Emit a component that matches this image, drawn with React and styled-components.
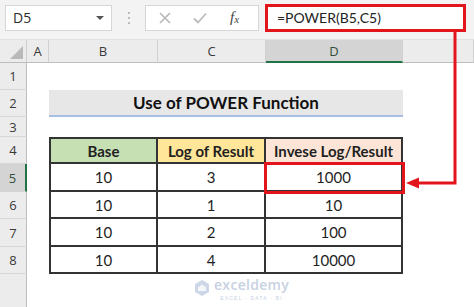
import React from "react";
import styled, { createGlobalStyle } from "styled-components";

const GlobalStyle = createGlobalStyle`
  html, body {
    margin: 0;
    padding: 0;
    background: #ffffff;
    overflow: hidden;
  }
`;

const COLS = "27px 22px 109px 108px 137px 1fr";

const Page = styled.div`
  position: relative;
  width: 474px;
  height: 307px;
  background: #ffffff;
  font-family: "Lato", "Liberation Sans", sans-serif;
  color: #1f1f1f;
  overflow: hidden;
`;

const Toolbar = styled.div`
  height: 40px;
  background: #f3f3f3;
  display: flex;
  align-items: center;
  padding: 0 8px 0 5px;
  box-sizing: border-box;
  border-bottom: 1px solid #e0e0e0;
`;

const NameBox = styled.div`
  width: 107px;
  height: 26px;
  margin-top: -4px;
  box-sizing: border-box;
  background: #ffffff;
  border: 1px solid #d6d6d6;
  display: flex;
  align-items: center;
  justify-content: space-between;
  padding: 0 7px 0 7px;
  font-family: "Open Sans", "Noto Sans", sans-serif;
  font-size: 14px;
  color: #2b2b2b;
`;

const Caret = styled.span`
  width: 0;
  height: 0;
  border-left: 4px solid transparent;
  border-right: 4px solid transparent;
  border-top: 4px solid #555555;
`;

const Grip = styled.div`
  width: 33px;
  display: flex;
  flex-direction: column;
  align-items: center;
  gap: 3px;
  margin-top: -4px;
  span {
    width: 2px;
    height: 2px;
    border-radius: 1px;
    background: #a8a8a8;
  }
`;

const FxGroup = styled.div`
  width: 114px;
  height: 26px;
  margin-top: -4px;
  box-sizing: border-box;
  background: #ffffff;
  border: 1px solid #d6d6d6;
  display: flex;
  align-items: center;
  padding: 0 0 0 12px;
  gap: 20px;
`;

const Fx = styled.span`
  font-family: "Liberation Serif", serif;
  font-style: italic;
  font-size: 15px;
  color: #444444;
  margin-left: 2px;
  sub {
    font-size: 11px;
    vertical-align: -1px;
  }
`;

const Formula = styled.div`
  flex: 1;
  height: 28px;
  margin: -4px 0 0 6px;
  box-sizing: border-box;
  background: #ffffff;
  border: 3px solid #e3151c;
  display: flex;
  align-items: center;
  padding-left: 9px;
  font-size: 14px;
  color: #222222;
`;

const Row = styled.div`
  display: grid;
  grid-template-columns: ${COLS};
  height: ${(p) => p.h}px;
`;

const Corner = styled.div`
  background: #ececec;
  border-right: 1px solid #cfcfcf;
  border-bottom: 1px solid #bdbdbd;
  position: relative;
  &::after {
    content: "";
    position: absolute;
    right: 3px;
    bottom: 3px;
    border-left: 13px solid transparent;
    border-bottom: 13px solid #b9b9b9;
  }
`;

const ColHead = styled.div`
  background: ${(p) => (p.selected ? "#d4d4d4" : "#ececec")};
  border-right: 1px solid #d0d0d0;
  border-bottom: ${(p) => (p.selected ? "2px solid #217346" : "1px solid #bdbdbd")};
  display: flex;
  align-items: center;
  justify-content: center;
  font-family: "Open Sans", "Noto Sans", sans-serif;
  font-size: 13px;
  color: ${(p) => (p.selected ? "#2f4f3c" : "#3a3a3a")};
`;

const RowHead = styled.div`
  background: ${(p) => (p.selected ? "#d4d4d4" : "#ececec")};
  border-right: ${(p) => (p.selected ? "2px solid #217346" : "1px solid #bdbdbd")};
  border-bottom: 1px solid #d6d6d6;
  display: flex;
  align-items: center;
  justify-content: center;
  font-family: "Open Sans", "Noto Sans", sans-serif;
  font-size: 13px;
  color: ${(p) => (p.selected ? "#2f4f3c" : "#3a3a3a")};
  box-sizing: border-box;
`;

const Cell = styled.div`
  box-sizing: border-box;
  background: ${(p) => p.bg || "#ffffff"};
  display: flex;
  align-items: center;
  justify-content: center;
  font-size: 15px;
  font-weight: ${(p) => (p.bold ? 700 : 400)};
  ${(p) =>
    p.boxed &&
    `
    border-right: 2px solid #333333;
    border-bottom: 2px solid #333333;
  `}
  ${(p) => p.first && `border-left: 2px solid #333333;`}
  ${(p) => p.top && `border-top: 2px solid #333333;`}
  ${(p) =>
    p.hl &&
    `
    outline: 3px solid #e3151c;
    outline-offset: -1px;
    position: relative;
    z-index: 1;
  `}
`;

const Title = styled.div`
  grid-column: 3 / span 3;
  background: #e8e7e7;
  border-bottom: 2px solid #a6bfe3;
  display: flex;
  align-items: center;
  justify-content: center;
  font-size: 17px;
  font-weight: 700;
  color: #111111;
  box-sizing: border-box;
`;

const Arrow = styled.svg`
  position: absolute;
  left: 0;
  top: 0;
  pointer-events: none;
  z-index: 3;
`;

const Watermark = styled.div`
  position: absolute;
  left: 193px;
  top: 275px;
  display: flex;
  align-items: center;
  gap: 3px;
  color: #c3cde0;
  opacity: 0.9;
`;

const MarkText = styled.div`
  display: flex;
  flex-direction: column;
  align-items: center;
`;

const MarkName = styled.span`
  font-family: "Open Sans", sans-serif;
  font-size: 14px;
  font-weight: 600;
  line-height: 20px;
  letter-spacing: 0.3px;
`;

const MarkTag = styled.span`
  font-family: "Liberation Sans", sans-serif;
  font-size: 5px;
  line-height: 6px;
  letter-spacing: 1.2px;
`;

const rows = [
  ["10", "3", "1000"],
  ["10", "1", "10"],
  ["10", "2", "100"],
  ["10", "4", "10000"],
];

const rowHeights = [27, 28, 27, 28, 27];

export default function App() {
  return (
    <Page>
      <GlobalStyle />
      <Toolbar>
        <NameBox>
          D5
          <Caret />
        </NameBox>
        <Grip>
          <span />
          <span />
          <span />
        </Grip>
        <FxGroup>
          <svg width="14" height="14" viewBox="0 0 14 14">
            <path d="M2 2 L12 12 M12 2 L2 12" stroke="#b8b8b8" strokeWidth="1.6" />
          </svg>
          <svg width="16" height="14" viewBox="0 0 16 14">
            <path d="M2 7.5 L6 11.5 L14 2.5" stroke="#bcbcbc" strokeWidth="1.8" fill="none" />
          </svg>
          <Fx>
            f<sub>x</sub>
          </Fx>
        </FxGroup>
        <Formula>=POWER(B5,C5)</Formula>
      </Toolbar>

      <Row h={23}>
        <Corner />
        <ColHead>A</ColHead>
        <ColHead>B</ColHead>
        <ColHead>C</ColHead>
        <ColHead selected>D</ColHead>
        <ColHead />
      </Row>

      <Row h={27}>
        <RowHead>1</RowHead>
      </Row>
      <Row h={27}>
        <RowHead>2</RowHead>
        <Cell />
        <Title>Use of POWER Function</Title>
      </Row>
      <Row h={20}>
        <RowHead>3</RowHead>
      </Row>
      <Row h={rowHeights[0]}>
        <RowHead>4</RowHead>
        <Cell />
        <Cell boxed first top bold bg="#c6e0b4">
          Base
        </Cell>
        <Cell boxed top bold bg="#ffe699">
          Log of Result
        </Cell>
        <Cell boxed top bold bg="#fce4d6">
          Invese Log/Result
        </Cell>
      </Row>
      {rows.map((r, i) => (
        <Row h={rowHeights[i + 1]} key={i}>
          <RowHead selected={i === 0}>{i + 5}</RowHead>
          <Cell />
          <Cell boxed first>
            {r[0]}
          </Cell>
          <Cell boxed>{r[1]}</Cell>
          <Cell boxed hl={i === 0}>
            {r[2]}
          </Cell>
        </Row>
      ))}
      <Row h={40}>
        <RowHead />
      </Row>

      <Arrow width="474" height="307">
        <polyline
          points="455,32 455,183 417,183"
          fill="none"
          stroke="#e3151c"
          strokeWidth="3"
        />
        <polygon points="406,183 419,177.5 419,188.5" fill="#e3151c" />
      </Arrow>

      <Watermark>
        <svg width="18" height="18" viewBox="0 0 18 18">
          <path d="M9 1 L16 5 L16 13 L9 17 L2 13 L2 5 Z" fill="#c9d3e5" />
          <path d="M5 12 L5 8.5 L9 5.5 L13 8.5 L13 12 Z" fill="#ffffff" opacity="0.8" />
        </svg>
        <MarkText>
          <MarkName>exceldemy</MarkName>
          <MarkTag>EXCEL · DATA · BI</MarkTag>
        </MarkText>
      </Watermark>
    </Page>
  );
}
